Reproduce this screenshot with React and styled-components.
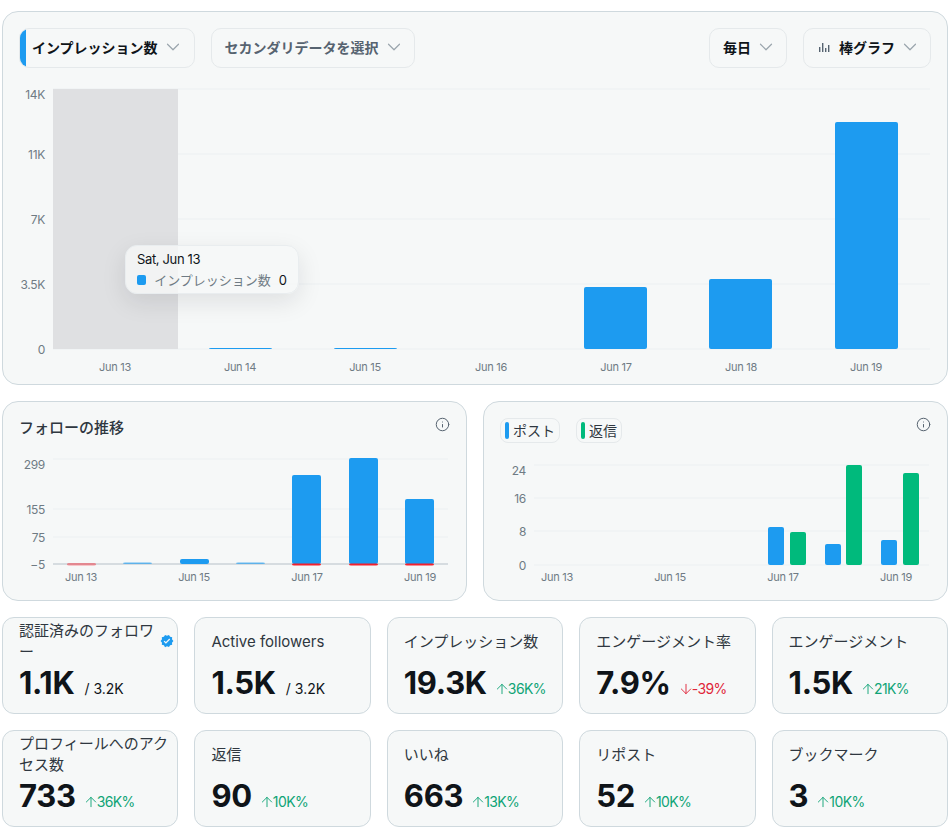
import React from 'react';
import styled, { createGlobalStyle } from 'styled-components';
import { ChevronDown, Info, ArrowUp, ArrowDown } from 'lucide-react';
import { MdVerified } from 'react-icons/md';

const BLUE = '#1d9bf0';
const GREEN = '#00ba7c';
const RED = '#f4212e';
const GRID = '#ebeff1';
const AXIS = '#6f7b84';
const FONT = `Inter, "Noto Sans CJK JP", sans-serif`;

const GlobalStyle = createGlobalStyle`
  html, body {
    margin: 0;
    padding: 0;
    background: #fff;
    font-family: ${FONT};
  }
  * {
    box-sizing: border-box;
  }
`;

const Page = styled.div`
  width: 952px;
  padding: 11px 4px 0 2px;
  display: flex;
  flex-direction: column;
  gap: 16px;
`;

const Card = styled.section`
  position: relative;
  background: #f6f8f8;
  border: 1px solid #cfd9de;
  border-radius: 16px;
`;

const MainCard = styled(Card)`
  height: 374px;
  padding: 16px;
`;

const Toolbar = styled.div`
  display: flex;
  align-items: center;
  gap: 16px;
  height: 40px;
`;

const Spacer = styled.div`
  flex: 1;
`;

const Select = styled.div`
  position: relative;
  overflow: hidden;
  height: 40px;
  padding: 0 ${(p) => (p.$accent ? 10 : 9)}px 2px ${(p) => (p.$accent ? 12 : 13)}px;
  display: flex;
  align-items: center;
  gap: 4px;
  border: 1px solid #e5e9eb;
  border-radius: 10px;
  font-size: 14px;
  font-weight: 700;
  color: ${(p) => (p.$muted ? '#566370' : '#0f1419')};
  svg.chevron {
    color: #9aa5ad;
  }
`;

const Accent = styled.span`
  position: absolute;
  left: 0;
  top: 0;
  bottom: 0;
  width: 6px;
  background: ${BLUE};
`;

const ChartSvg = styled.svg`
  display: block;
  font-family: ${FONT};
  letter-spacing: -0.3px;
`;

const MainSvg = styled(ChartSvg)`
  margin-top: 12px;
`;

const Tooltip = styled.div`
  position: absolute;
  left: 122px;
  top: 233px;
  width: 174px;
  height: 49px;
  padding: 4px 11px;
  background: rgba(246, 248, 248, 0.8);
  border: 1px solid #e9edef;
  border-radius: 12px;
  box-shadow: 0 8px 24px rgba(15, 20, 25, 0.1);
  font-size: 13px;
  color: #0f1419;
  line-height: 18px;
  white-space: nowrap;
`;

const TipDate = styled.div`
  letter-spacing: -0.35px;
`;

const TipRow = styled.div`
  display: flex;
  align-items: center;
  margin-top: 3px;
`;

const TipSwatch = styled.span`
  width: 10px;
  height: 10px;
  margin-right: 8px;
  border-radius: 2px;
  background: ${BLUE};
`;

const TipLabel = styled.span`
  color: #6f7b84;
  margin-right: 8px;
`;

const ChartRow = styled.div`
  display: grid;
  grid-template-columns: repeat(2, minmax(0, 1fr));
  gap: 16px;
`;

const SmallCard = styled(Card)`
  height: 200px;
  padding: 16px 16px 0 16px;
`;

const SmallHead = styled.div`
  height: 26px;
  display: flex;
  align-items: flex-start;
  gap: 16px;
`;

const SmallTitle = styled.h2`
  margin: 0;
  font-size: 15px;
  line-height: 20px;
  font-weight: 500;
  color: #2f3740;
`;

const Legend = styled.div`
  height: 25px;
  padding: 0 4px 1px 4px;
  display: flex;
  align-items: center;
  gap: 4px;
  border: 1px solid #e5e9eb;
  border-radius: 8px;
  font-size: 14px;
  font-weight: 400;
  color: #2f3740;
`;

const LegendMark = styled.span`
  width: 4px;
  height: 17px;
  border-radius: 2px;
  background: ${(p) => p.$color};
`;

const InfoButton = styled.span`
  position: absolute;
  right: 16px;
  top: 15px;
  display: flex;
  color: #566370;
`;

const StatGrid = styled.div`
  display: grid;
  grid-template-columns: repeat(5, minmax(0, 1fr));
  gap: 16px;
`;

const Stat = styled(Card)`
  height: 97px;
  border-radius: 12px;
  padding: 2px 6px 0 16px;
`;

const StatTitle = styled.div`
  height: 42px;
  display: flex;
  align-items: center;
  font-size: 15px;
  line-height: 21px;
  font-weight: 400;
  color: #2f3740;
  svg {
    flex: none;
    margin-left: auto;
    margin-right: -3px;
  }
`;

const StatValue = styled.div`
  display: flex;
  align-items: baseline;
  margin-top: 1px;
  height: 40px;
  line-height: 40px;
`;

const Big = styled.span`
  font-size: 31px;
  font-weight: 700;
  letter-spacing: -0.3px;
  color: #0f1419;
`;

const Total = styled.span`
  margin-left: 10px;
  font-size: 14px;
  color: #0f1419;
`;

const Delta = styled.span`
  margin-left: 7px;
  font-size: 14px;
  letter-spacing: -0.6px;
  color: ${(p) => (p.$down ? '#e0263a' : '#10a476')};
  svg {
    vertical-align: -3px;
    margin-right: -2px;
  }
`;

function Grid({ lines, x1, x2 }) {
  return lines.map((y) => (
    <line key={y} x1={x1} x2={x2} y1={y} y2={y} stroke={GRID} strokeWidth="1.2" />
  ));
}

function AxisText({ x, y, anchor = 'end', size = 12, children }) {
  return (
    <text x={x} y={y} textAnchor={anchor} dominantBaseline="central" fontSize={size} fill={AXIS}>
      {children}
    </text>
  );
}

function Bar({ x, w, top, bottom, fill = BLUE, opacity }) {
  return <rect x={x} y={top} width={w} height={bottom - top} rx="2" fill={fill} opacity={opacity} />;
}

const mainBars = [
  [190, 268],
  [315, 268],
  [565, 207],
  [690, 199],
  [816, 42],
];
const mainTicks = [
  ['14K', 14],
  ['11K', 74],
  ['7K', 139],
  ['3.5K', 204],
  ['0', 269],
];
const mainDays = [96, 221, 346, 472, 597, 722, 847];

function MainChart() {
  return (
    <MainSvg width="912" height="300">
      <Grid lines={[9, 74, 139, 204, 269]} x1={34} x2={911} />
      <rect x="34" y="9" width="125" height="260" fill="#dfe0e2" />
      {mainTicks.map(([label, y]) => (
        <AxisText key={label} x={26} y={y}>{label}</AxisText>
      ))}
      {mainBars.map(([x, top]) => (
        <Bar key={x} x={x} w={63} top={top} bottom={269} />
      ))}
      {mainDays.map((x, i) => (
        <AxisText key={x} x={x} y={287} anchor="middle" size={11}>{`Jun ${13 + i}`}</AxisText>
      ))}
    </MainSvg>
  );
}

function FollowChart() {
  const base = 120;
  return (
    <ChartSvg width="429" height="140">
      <Grid lines={[15, 65, 93]} x1={34} x2={429} />
      <line x1="34" x2="429" y1={base} y2={base} stroke="#b6c0c8" strokeWidth="1.2" />
      {[['299', 20], ['155', 65], ['75', 93], ['−5', 120]].map(([label, y]) => (
        <AxisText key={label} x={26} y={y}>{label}</AxisText>
      ))}
      <Bar x={48} w={29} top={119} bottom={121.5} fill={RED} opacity={0.45} />
      <Bar x={104} w={29} top={118.5} bottom={120} opacity={0.65} />
      <Bar x={161} w={29} top={115} bottom={120} />
      <Bar x={217} w={29} top={118.5} bottom={120} opacity={0.65} />
      {[[273, 31], [330, 14], [386, 55]].map(([x, top]) => (
        <g key={x}>
          <Bar x={x} w={29} top={top} bottom={120} />
          <Bar x={x} w={29} top={119.5} bottom={121.5} fill={RED} />
        </g>
      ))}
      {[[62, 13], [175, 15], [288, 17], [401, 19]].map(([x, d]) => (
        <AxisText key={d} x={x} y={133} anchor="middle" size={11}>{`Jun ${d}`}</AxisText>
      ))}
    </ChartSvg>
  );
}

function PostChart() {
  const base = 121;
  const bars = [
    [268, 83, BLUE],
    [290, 88, GREEN],
    [325, 100, BLUE],
    [346, 21, GREEN],
    [381, 96, BLUE],
    [403, 29, GREEN],
  ];
  return (
    <ChartSvg width="429" height="140">
      <Grid lines={[21, 54, 87, 121]} x1={34} x2={429} />
      {[['24', 26], ['16', 54], ['8', 87], ['0', 121]].map(([label, y]) => (
        <AxisText key={label} x={26} y={y}>{label}</AxisText>
      ))}
      {bars.map(([x, top, fill]) => (
        <Bar key={x} x={x} w={16} top={top} bottom={base} fill={fill} />
      ))}
      {[[57, 13], [170, 15], [283, 17], [396, 19]].map(([x, d]) => (
        <AxisText key={d} x={x} y={133} anchor="middle" size={11}>{`Jun ${d}`}</AxisText>
      ))}
    </ChartSvg>
  );
}

const stats = [
  { title: '認証済みのフォロワー', value: '1.1K', total: '3.2K', verified: true },
  { title: 'Active followers', value: '1.5K', total: '3.2K' },
  { title: 'インプレッション数', value: '19.3K', delta: '36K%' },
  { title: 'エンゲージメント率', value: '7.9%', delta: '-39%', down: true },
  { title: 'エンゲージメント', value: '1.5K', delta: '21K%' },
  { title: 'プロフィールへのアクセス数', value: '733', delta: '36K%' },
  { title: '返信', value: '90', delta: '10K%' },
  { title: 'いいね', value: '663', delta: '13K%' },
  { title: 'リポスト', value: '52', delta: '10K%' },
  { title: 'ブックマーク', value: '3', delta: '10K%' },
];

function StatCard({ title, value, total, delta, down, verified }) {
  const Arrow = down ? ArrowDown : ArrowUp;
  return (
    <Stat>
      <StatTitle>
        <span>{title}</span>
        {verified && <MdVerified size={14} color={BLUE} />}
      </StatTitle>
      <StatValue>
        <Big>{value}</Big>
        {total && <Total>/ {total}</Total>}
        {delta && (
          <Delta $down={down}>
            <Arrow size={16} strokeWidth={1.4} />
            {delta}
          </Delta>
        )}
      </StatValue>
    </Stat>
  );
}

const Chevron = () => <ChevronDown className="chevron" size={22} strokeWidth={1.3} />;

const BarsSvg = styled.svg`
  margin-right: 4px;
`;

function BarsIcon() {
  return (
    <BarsSvg width="14" height="14" viewBox="0 0 14 14" fill="#566370">
      <rect x="2" y="7" width="1.4" height="5" />
      <rect x="5" y="3" width="1.4" height="9" />
      <rect x="8" y="8" width="1.4" height="4" />
      <rect x="11" y="5" width="1.4" height="7" />
    </BarsSvg>
  );
}

export default function App() {
  return (
    <>
      <GlobalStyle />
      <Page>
        <MainCard>
          <Toolbar>
            <Select $accent>
              <Accent />
              インプレッション数
              <Chevron />
            </Select>
            <Select $muted>
              セカンダリデータを選択
              <Chevron />
            </Select>
            <Spacer />
            <Select>
              毎日
              <Chevron />
            </Select>
            <Select>
              <BarsIcon />
              棒グラフ
              <Chevron />
            </Select>
          </Toolbar>
          <MainChart />
          <Tooltip>
            <TipDate>Sat, Jun 13</TipDate>
            <TipRow>
              <TipSwatch />
              <TipLabel>インプレッション数</TipLabel>
              0
            </TipRow>
          </Tooltip>
        </MainCard>
        <ChartRow>
          <SmallCard>
            <SmallHead>
              <SmallTitle>フォローの推移</SmallTitle>
            </SmallHead>
            <InfoButton><Info size={15} strokeWidth={1.6} /></InfoButton>
            <FollowChart />
          </SmallCard>
          <SmallCard>
            <SmallHead>
              <Legend><LegendMark $color={BLUE} />ポスト</Legend>
              <Legend><LegendMark $color={GREEN} />返信</Legend>
            </SmallHead>
            <InfoButton><Info size={15} strokeWidth={1.6} /></InfoButton>
            <PostChart />
          </SmallCard>
        </ChartRow>
        <StatGrid>
          {stats.map((s) => (
            <StatCard key={s.title} {...s} />
          ))}
        </StatGrid>
      </Page>
    </>
  );
}
